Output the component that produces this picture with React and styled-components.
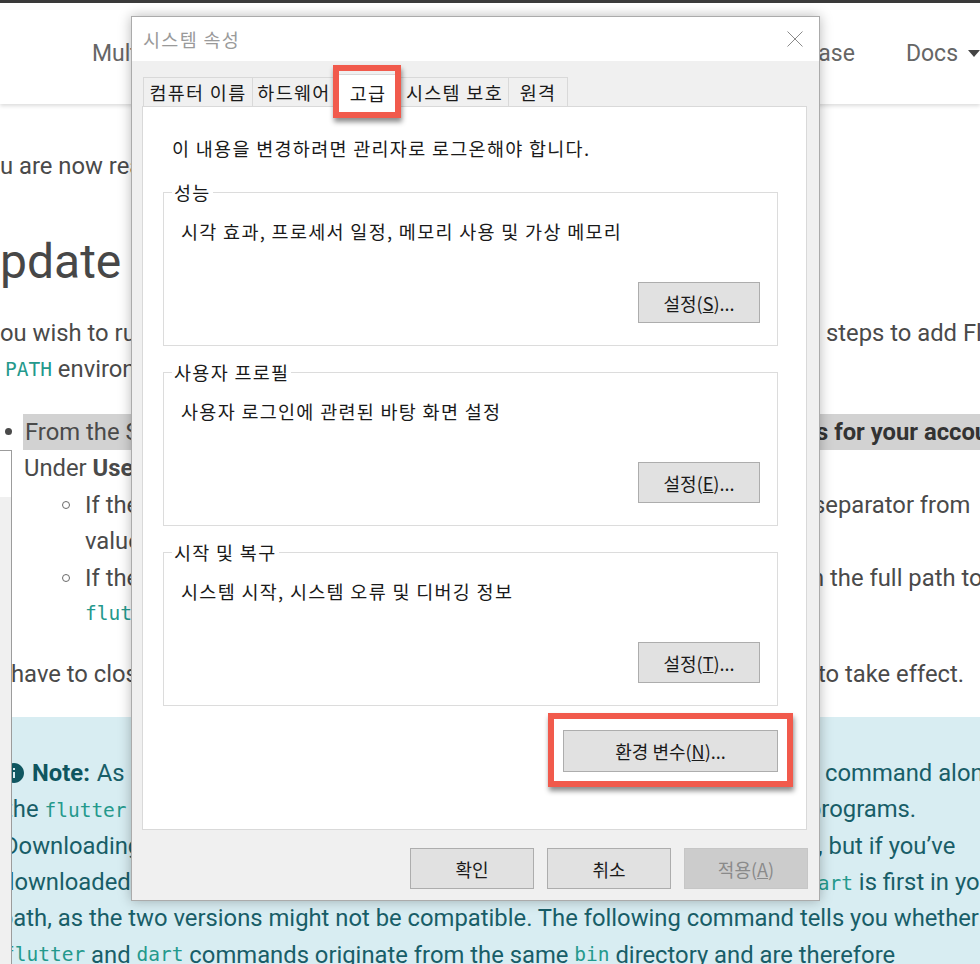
import React from 'react';
import styled, { createGlobalStyle } from 'styled-components';
import { MdInfo } from 'react-icons/md';

const GlobalStyle = createGlobalStyle`
  html, body {
    margin: 0;
    padding: 0;
    background: #fff;
    overflow: hidden;
  }
`;

const Page = styled.div`
  position: relative;
  width: 980px;
  height: 964px;
  overflow: hidden;
  background: #fff;
  color: #4a4a4a;
  font-family: Roboto, "Liberation Sans", sans-serif;
  font-size: 23.8px;
`;

// ---------- background web page ----------

const Header = styled.header`
  position: relative;
  z-index: 1;
  height: 101px;
  border-top: 3px solid #3a3a3a;
  background: #fff;
  box-shadow: 0 2px 4px rgba(0, 0, 0, 0.14);
  display: flex;
  align-items: center;
  padding-left: 92px;
  font-size: 23px;
  color: #666;
  white-space: nowrap;
`;

const Spacer = styled.div`
  flex: 1;
`;

const NavItem = styled.span`
  display: flex;
  align-items: center;
  margin-left: ${p => p.$gap || 0}px;
`;

const Caret = styled.span`
  width: 0;
  height: 0;
  margin-left: 10px;
  border-left: 6px solid transparent;
  border-right: 6px solid transparent;
  border-top: 7px solid #444;
`;

const Block = styled.div`
  margin-top: ${p => p.$mt}px;
`;

const Heading = styled.h1`
  margin: 48px 0 0;
  height: 60px;
  line-height: 60px;
  font-size: 48px;
  font-weight: 400;
  color: #474747;
  white-space: nowrap;
`;

const Line = styled.div`
  display: flex;
  align-items: center;
  height: 36.4px;
  white-space: nowrap;
  padding-left: ${p => p.$x || 0}px;
`;

const HighlightLine = styled(Line)`
  flex: 1;
  padding-left: 2px;
  background: #d2d2d2;
`;

const Lead = styled.span`
  flex: none;
  width: ${p => p.$w}px;
  overflow: hidden;
`;

const Tail = styled.span`
  flex: none;
  font-weight: ${p => (p.$bold ? 700 : 400)};
  color: ${p => (p.$bold ? '#333' : 'inherit')};
`;

const Code = styled.code`
  font-family: "DejaVu Sans Mono", "Liberation Mono", monospace;
  font-size: 19.5px;
  color: #24998c;
`;

const Row = styled.div`
  display: flex;
  align-items: center;
`;

const Disc = styled.span`
  flex: none;
  width: 7px;
  height: 7px;
  margin: 0 11px 0 5px;
  border-radius: 50%;
  background: #4a4a4a;
`;

const Circle = styled.span`
  flex: none;
  box-sizing: border-box;
  width: 8px;
  height: 8px;
  margin: 0 15px 0 62px;
  border-radius: 50%;
  border: 1.5px solid #6a6a6a;
`;

const Note = styled.div`
  margin-top: 24.8px;
  padding-top: 37.8px;
  height: 300px;
  background: #d8edf2;
  color: #185e68;
`;

const InfoIcon = styled(MdInfo)`
  flex: none;
  width: 24px;
  height: 24px;
  margin: 0 6px 0 2px;
  color: #0f5660;
`;

const NoteLabel = styled.b`
  color: #0f5660;
  margin-right: 7px;
`;

const SideWindow = styled.div`
  position: absolute;
  left: 0;
  top: 450px;
  z-index: 2;
  width: 11px;
  height: 600px;
  border-top: 1px solid #9c9c9c;
  border-right: 1px solid #9c9c9c;
  background: linear-gradient(#fff 0 46px, #f0f0f0 46px);
`;

// ---------- system properties dialog ----------

const Dialog = styled.div`
  position: absolute;
  left: 131px;
  top: 16px;
  z-index: 5;
  box-sizing: border-box;
  width: 689px;
  height: 885px;
  border: 1px solid #ababab;
  background: #f0f0f0;
  box-shadow: 0 0 12px rgba(0, 0, 0, 0.28);
  display: flex;
  flex-direction: column;
  font-family: "Noto Sans CJK KR", "Noto Sans", sans-serif;
  font-size: 18.5px;
  letter-spacing: 1.3px;
  color: #1a1a1a;
`;

const TitleBar = styled.div`
  flex: none;
  height: 44px;
  background: #fff;
  display: flex;
  align-items: center;
  justify-content: space-between;
  padding: 0 16px 0 11px;
`;

const Title = styled.span`
  color: #9a9a9a;
  line-height: 24px;
`;

const CloseButton = styled.svg`
  width: 16px;
  height: 16px;
  stroke: #8a8a8a;
  stroke-width: 1;
`;

const DialogBody = styled.div`
  flex: 1;
  display: flex;
  flex-direction: column;
  padding: 16px 12px 11px 10px;
`;

const TabList = styled.div`
  position: relative;
  z-index: 1;
  display: flex;
  align-items: flex-end;
  height: 29px;
  padding-left: 2px;
`;

const Tab = styled.div`
  position: relative;
  flex: none;
  box-sizing: border-box;
  width: ${p => p.$w}px;
  height: ${p => (p.$active ? 33 : 29)}px;
  margin: 0 0 ${p => (p.$active ? -1 : 0)}px -1px;
  padding-top: ${p => (p.$active ? 3 : 0)}px;
  border: 1px solid #d9d9d9;
  border-bottom: none;
  background: ${p => (p.$active ? '#fff' : '#f0f0f0')};
  z-index: ${p => (p.$active ? 2 : 1)};
  display: flex;
  align-items: center;
  justify-content: center;
  line-height: 24px;
  white-space: nowrap;
`;

const Marker = styled.span`
  position: absolute;
  left: ${p => p.$l}px;
  right: ${p => p.$r}px;
  top: ${p => p.$t}px;
  bottom: ${p => p.$b}px;
  border: 6px solid #f15a4c;
  box-shadow: 1px 4px 5px rgba(0, 0, 0, 0.45);
  pointer-events: none;
`;

const Panel = styled.div`
  flex: 1;
  display: flex;
  flex-direction: column;
  background: #fff;
  border: 1px solid #d9d9d9;
  padding: 29px 28px 0 20px;
`;

const Notice = styled.div`
  padding-left: 9px;
  line-height: 24px;
`;

const GroupBox = styled.fieldset`
  margin: ${p => (p.$first ? 20 : 14)}px 0 0;
  padding: 0 17px 22px 8px;
  border: 1px solid #dcdcdc;
  min-width: 0;
`;

const Legend = styled.legend`
  padding: 0 2px;
  line-height: 24px;
`;

const Description = styled.div`
  margin-top: 15px;
  padding-left: 9px;
  line-height: 24px;
`;

const ButtonRow = styled.div`
  display: flex;
  justify-content: flex-end;
  margin-top: ${p => p.$mt || 0}px;
  gap: 13px;
`;

const Button = styled.button`
  position: relative;
  box-sizing: border-box;
  width: ${p => p.$w}px;
  height: ${p => p.$h || 41}px;
  padding: 0;
  border: 1px solid ${p => (p.disabled ? '#c6c6c6' : '#adadad')};
  background: ${p => (p.disabled ? '#cccccc' : '#e1e1e1')};
  color: ${p => (p.disabled ? '#8a8a8a' : '#1a1a1a')};
  font-family: inherit;
  font-size: 18px;
  letter-spacing: 0;
  line-height: 24px;
`;

const Footer = styled(ButtonRow)`
  margin: 18px -1px 0 0;
`;

const tabs = [
  { label: '컴퓨터 이름', width: 110 },
  { label: '하드웨어', width: 84 },
  { label: '고급', width: 66, active: true },
  { label: '시스템 보호', width: 109 },
  { label: '원격', width: 60 },
];

const groups = [
  { title: '성능', desc: '시각 효과, 프로세서 일정, 메모리 사용 및 가상 메모리', key: 'S' },
  { title: '사용자 프로필', desc: '사용자 로그인에 관련된 바탕 화면 설정', key: 'E' },
  { title: '시작 및 복구', desc: '시스템 시작, 시스템 오류 및 디버깅 정보', key: 'T' },
];

function SystemProperties() {
  return (
    <Dialog>
      <TitleBar>
        <Title>시스템 속성</Title>
        <CloseButton viewBox="0 0 16 16">
          <line x1="0.5" y1="0.5" x2="15.5" y2="15.5" />
          <line x1="15.5" y1="0.5" x2="0.5" y2="15.5" />
        </CloseButton>
      </TitleBar>
      <DialogBody>
        <TabList>
          {tabs.map(t => (
            <Tab key={t.label} $w={t.width} $active={t.active}>
              {t.label}
              {t.active && <Marker $l={-3} $r={-1} $t={-10} $b={-11} />}
            </Tab>
          ))}
        </TabList>
        <Panel>
          <Notice>이 내용을 변경하려면 관리자로 로그온해야 합니다.</Notice>
          {groups.map((g, i) => (
            <GroupBox key={g.title} $first={i === 0}>
              <Legend>{g.title}</Legend>
              <Description>{g.desc}</Description>
              <ButtonRow $mt={39}>
                <Button $w={122}>
                  설정(<u>{g.key}</u>)...
                </Button>
              </ButtonRow>
            </GroupBox>
          ))}
          <ButtonRow $mt={24}>
            <Button $w={215} $h={42}>
              환경 변수(<u>N</u>)...
              <Marker $l={-16} $r={-16} $t={-18} $b={-16} />
            </Button>
          </ButtonRow>
        </Panel>
        <Footer>
          <Button $w={124}>확인</Button>
          <Button $w={124}>취소</Button>
          <Button $w={124} disabled>
            적용(<u>A</u>)
          </Button>
        </Footer>
      </DialogBody>
    </Dialog>
  );
}

function DocsPage() {
  return (
    <>
      <Header>
        <NavItem>Multi-Platform</NavItem>
        <Spacer />
        <NavItem>Showcase</NavItem>
        <NavItem $gap={51}>
          Docs
          <Caret />
        </NavItem>
      </Header>

      <Block $mt={44}>
        <Line>u are now ready</Line>
      </Block>

      <Heading>pdate your path</Heading>

      <Block $mt={22.4}>
        <Line>
          <Lead $w={826}>ou wish to run Flutter commands</Lead>
          <Tail>steps to add Flutter</Tail>
        </Line>
        <Line $x={5}>
          <Code>PATH</Code>&nbsp;environment variable:
        </Line>
      </Block>

      <Block $mt={26.2}>
        <Row>
          <Disc />
          <HighlightLine>
            <Lead $w={791}>From the Start search bar</Lead>
            <Tail $bold>s for your account</Tail>
          </HighlightLine>
        </Row>
        <Line $x={24}>
          Under&nbsp;<b>User variables</b>
        </Line>
        <Row>
          <Circle />
          <Line>
            <Lead $w={728}>If the entry exists</Lead>
            <Tail>separator from</Tail>
          </Line>
        </Row>
        <Line $x={85}>value.</Line>
        <Row>
          <Circle />
          <Line>
            <Lead $w={726}>If the entry doesn't exist</Lead>
            <Tail>n the full path to</Tail>
          </Line>
        </Row>
        <Line $x={85}>
          <Code>flutter\bin</Code>
        </Line>
      </Block>

      <Block $mt={23.6}>
        <Line $x={11}>
          <Lead $w={807}>have to close and reopen</Lead>
          <Tail>to take effect.</Tail>
        </Line>
      </Block>

      <Note>
        <Line>
          <Lead $w={825}>
            <Row>
              <InfoIcon />
              <NoteLabel>Note:</NoteLabel>As of
            </Row>
          </Lead>
          <Tail>command along</Tail>
        </Line>
        <Line $x={5}>
          <Lead $w={803}>
            the <Code>flutter</Code> SDK
          </Lead>
          <Tail>programs.</Tail>
        </Line>
        <Line $x={3}>
          <Lead $w={815}>Downloading</Lead>
          <Tail>, but if you’ve</Tail>
        </Line>
        <Line $x={1}>
          <Lead $w={805}>downloaded</Lead>
          <Tail>
            <Code>dart</Code> is first in your
          </Tail>
        </Line>
        <Line $x={0}>
          path, as the two versions might not be compatible. The following command tells you whether
        </Line>
        <Line $x={3}>
          <Code>flutter</Code>&nbsp;and&nbsp;<Code>dart</Code>&nbsp;commands originate from the same&nbsp;
          <Code>bin</Code>&nbsp;directory and are therefore
        </Line>
      </Note>
    </>
  );
}

export default function App() {
  return (
    <Page>
      <GlobalStyle />
      <DocsPage />
      <SideWindow />
      <SystemProperties />
    </Page>
  );
}
